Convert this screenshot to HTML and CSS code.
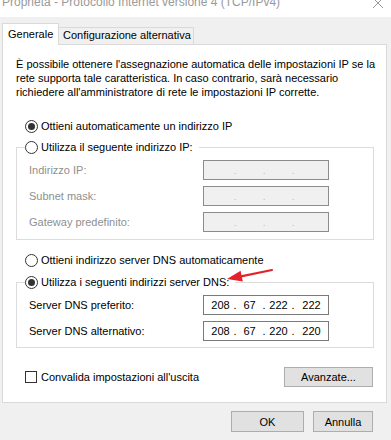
FILE: index.html
```html
<!DOCTYPE html>
<html lang="it">
<head>
<meta charset="utf-8">
<title>Proprietà - Protocollo Internet versione 4 (TCP/IPv4)</title>
<link rel="stylesheet" href="styles.css">
</head>
<body>
<div class="window">
  <div class="titlebar">
    <span class="title">Proprietà - Protocollo Internet versione 4 (TCP/IPv4)</span>
    <svg class="close" width="12" height="12" viewBox="0 0 12 12"><path d="M1 1 L11 11 M11 1 L1 11" stroke="#9a9a9a" stroke-width="1" fill="none"/></svg>
  </div>
  <div class="tabs">
    <div class="tab active">Generale</div>
    <div class="tab">Configurazione alternativa</div>
  </div>
  <div class="panel">
    <p class="intro">È possibile ottenere l'assegnazione automatica delle impostazioni IP se la<br>rete supporta tale caratteristica. In caso contrario, sarà necessario<br>richiedere all'amministratore di rete le impostazioni IP corrette.</p>

    <div class="opt opt-ip-auto"><span class="radio checked"></span>Ottieni automaticamente un indirizzo IP</div>

    <fieldset class="group group-ip">
      <legend class="legend"><span class="radio"></span>Utilizza il seguente indirizzo IP:</legend>
      <div class="rows">
        <div class="row off"><span class="lbl">Indirizzo IP:</span><div class="ip ip-off"><span class="f"></span><span class="d">.</span><span class="f"></span><span class="d">.</span><span class="f"></span><span class="d">.</span><span class="f last"></span></div></div>
        <div class="row off"><span class="lbl">Subnet mask:</span><div class="ip ip-off"><span class="f"></span><span class="d">.</span><span class="f"></span><span class="d">.</span><span class="f"></span><span class="d">.</span><span class="f last"></span></div></div>
        <div class="row off"><span class="lbl">Gateway predefinito:</span><div class="ip ip-off"><span class="f"></span><span class="d">.</span><span class="f"></span><span class="d">.</span><span class="f"></span><span class="d">.</span><span class="f last"></span></div></div>
      </div>
    </fieldset>

    <div class="opt opt-dns-auto"><span class="radio"></span>Ottieni indirizzo server DNS automaticamente</div>

    <fieldset class="group group-dns">
      <legend class="legend"><span class="radio checked"></span>Utilizza i seguenti indirizzi server DNS:</legend>
      <div class="rows">
        <div class="row"><span class="lbl">Server DNS preferito:</span><div class="ip"><span class="f">208</span><span class="d">.</span><span class="f">67</span><span class="d">.</span><span class="f">222</span><span class="d">.</span><span class="f last">222</span></div></div>
        <div class="row"><span class="lbl">Server DNS alternativo:</span><div class="ip"><span class="f">208</span><span class="d">.</span><span class="f">67</span><span class="d">.</span><span class="f">220</span><span class="d">.</span><span class="f last">220</span></div></div>
      </div>
    </fieldset>

    <div class="bottom">
      <div class="opt"><span class="check"></span>Convalida impostazioni all'uscita</div>
      <button class="btn btn-adv">Avanzate...</button>
    </div>
  </div>
  <div class="actions">
    <button class="btn btn-ok">OK</button>
    <button class="btn btn-cancel">Annulla</button>
  </div>
  <svg class="arrow" width="52" height="20" viewBox="0 0 52 20">
    <path d="M48 4 L17 10.4" stroke="#e3232b" stroke-width="2.2" stroke-linecap="round" fill="none"/>
    <polygon points="3,13 16.6,4.7 18.8,15.5" fill="#e3232b"/>
  </svg>
</div>
</body>
</html>
```

FILE: styles.css
```css
* { box-sizing: border-box; }
html, body { margin: 0; padding: 0; }
body {
  background: #f0f0f0;
  font-family: "Liberation Sans", Arial, sans-serif;
  font-size: 11px;
  color: #000;
  width: 391px;
  height: 440px;
  overflow: hidden;
}
.window { position: relative; width: 391px; height: 440px; }

.titlebar {
  height: 17px;
  background: #fff;
  position: relative;
  overflow: hidden;
}
.title {
  position: absolute;
  left: 2px;
  top: -5px;
  font-size: 12px;
  line-height: 14px;
  color: #9a9a9a;
  white-space: nowrap;
}
.close { position: absolute; left: 372px; top: -3px; }

.tabs {
  display: flex;
  align-items: flex-end;
  padding-left: 2px;
  margin-top: 6px;
  height: 21px;
  position: relative;
  z-index: 2;
}
.tab {
  border: 1px solid #d9d9d9;
  border-bottom: none;
  background: #f0f0f0;
  height: 17px;
  line-height: 15px;
  padding: 0 4px 0 4px;
  white-space: nowrap;
}
.tab.active {
  background: #fff;
  height: 22px;
  margin-bottom: -1px;
  line-height: 20px;
  padding: 0 5px 0 5px;
  width: 57px;
}
.tab + .tab { border-left: none; width: 135px; }

.panel {
  margin-left: 2px;
  width: 385px;
  height: 359px;
  background: #fff;
  border: 1px solid #d9d9d9;
  padding: 12px 0 0 13px;
  display: flex;
  flex-direction: column;
  position: relative;
  z-index: 1;
}
.intro {
  margin: 0;
  line-height: 14px;
  white-space: nowrap;
}

.opt {
  display: flex;
  align-items: center;
  gap: 3px;
  height: 14px;
  line-height: 14px;
  margin-left: 9px;
  white-space: nowrap;
}
.opt-ip-auto { margin-top: 20px; }
.opt-dns-auto { margin-top: 13px; }

.radio {
  width: 13px;
  height: 13px;
  border: 1px solid #333;
  border-radius: 50%;
  display: inline-flex;
  align-items: center;
  justify-content: center;
  flex: none;
  background: #fff;
}
.radio.checked::after {
  content: "";
  width: 7px;
  height: 7px;
  border-radius: 50%;
  background: #333;
}
.check {
  width: 12px;
  height: 12px;
  border: 1px solid #333;
  background: #fff;
  flex: none;
  margin-right: 1px;
}

.group {
  margin: 0;
  padding: 0;
  width: 358px;
  border: 1px solid #dcdcdc;
  min-width: 0;
}
.group-ip { margin-top: 7px; }
.group-dns { margin-top: 8px; }
.legend {
  display: flex;
  align-items: center;
  gap: 3px;
  height: 14px;
  line-height: 14px;
  padding: 0 6px 0 0;
  margin-left: 8px;
  white-space: nowrap;
}
.rows {
  display: flex;
  flex-direction: column;
  gap: 6px;
  padding: 6px 0 6px 12px;
}
.group-ip .rows { padding-bottom: 7px; }
.row {
  display: flex;
  align-items: center;
  height: 20px;
}
.lbl { width: 174px; white-space: nowrap; }
.row.off .lbl { color: #8f8f8f; }

.ip {
  width: 126px;
  height: 20px;
  border: 1px solid #7a7a7a;
  background: #fff;
  display: flex;
  align-items: center;
  padding-left: 4px;
  line-height: 18px;
}
.ip-off { background: #f0f0f0; border-color: #8c8c8c; }
.ip .f { width: 25px; text-align: center; }
.ip .f.last { flex: 1; }
.ip .d { width: 4px; text-align: center; }
.ip-off .d { color: #9a9a9a; font-size: 8px; line-height: 14px; padding-top: 3px; }

.bottom {
  display: flex;
  align-items: center;
  justify-content: space-between;
  width: 357px;
  margin-top: 19px;
}
.bottom .opt { margin-left: 9px; }

.btn {
  font-family: "Liberation Sans", Arial, sans-serif;
  font-size: 11px;
  color: #000;
  background: #e1e1e1;
  border: 1px solid #adadad;
  padding: 0;
  margin: 0;
  height: 20px;
  line-height: 18px;
}
.btn-adv { width: 89px; }

.actions {
  display: flex;
  justify-content: flex-end;
  gap: 9px;
  margin-top: 8px;
  padding-right: 18px;
}
.btn-ok { width: 73px; height: 21px; }
.btn-cancel { width: 60px; height: 21px; }

.arrow { position: absolute; left: 224px; top: 266px; z-index: 3; }
```
